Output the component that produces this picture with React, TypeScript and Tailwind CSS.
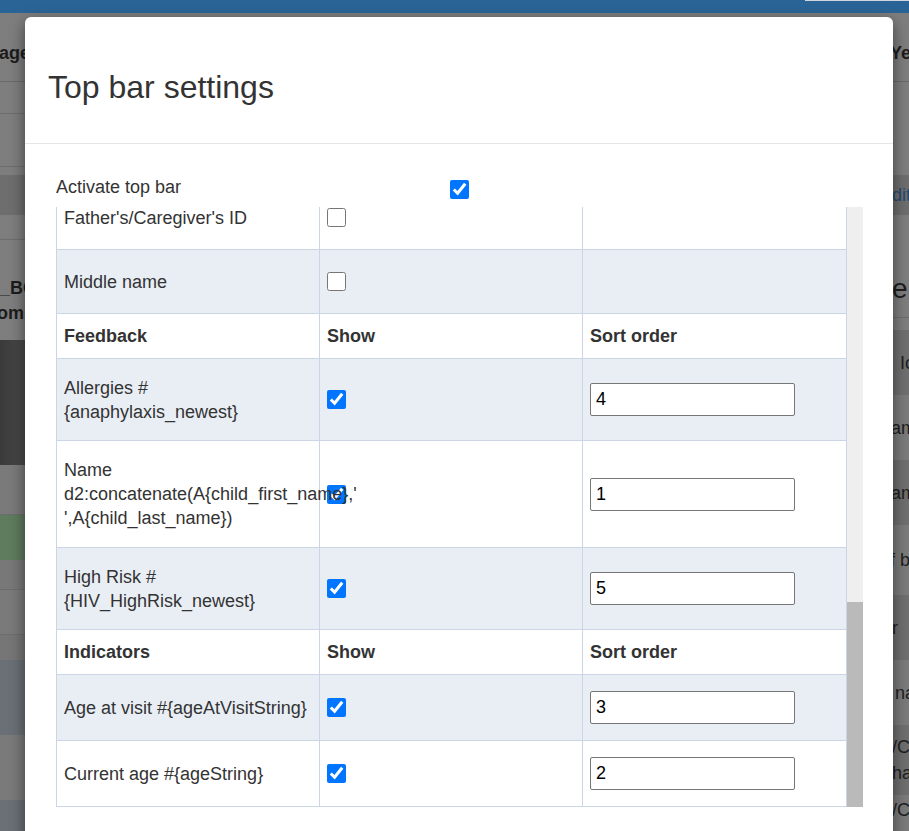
import { useLayoutEffect, useRef, useState } from 'react';
import type { ReactNode } from 'react';

type Item = { label: ReactNode; show: boolean; order?: string; height: string };
type Group = { title: string; items: Item[] };

const plain = (label: string): Item => ({ label, show: false, height: 'h-[64px]' });

const groups: Group[] = [
  {
    title: 'Attributes',
    items: [
      'Unique ID',
      'First name',
      'Last name',
      'Sex',
      'Date of birth',
      'Place of birth',
      "Mother's name",
      "Mother's ID",
      "Mother's phone number",
      "Father's/Caregiver's name",
      "Father's/Caregiver's phone",
      'Address',
      'Village',
      'District',
      'Region',
      'National ID',
      'Nationality',
      "Father's/Caregiver's ID",
      'Middle name',
    ].map(plain),
  },
  {
    title: 'Feedback',
    items: [
      {
        label: (
          <>
            Allergies #<wbr />
            {'{anaphylaxis_newest}'}
          </>
        ),
        show: true,
        order: '4',
        height: 'h-[82px]',
      },
      {
        label: "Name d2:concatenate(A{child_first_name},' ',A{child_last_name})",
        show: true,
        order: '1',
        height: 'h-[107px]',
      },
      {
        label: (
          <>
            High Risk #<wbr />
            {'{HIV_HighRisk_newest}'}
          </>
        ),
        show: true,
        order: '5',
        height: 'h-[82px]',
      },
    ],
  },
  {
    title: 'Indicators',
    items: [
      { label: 'Age at visit #{ageAtVisitString}', show: true, order: '3', height: 'h-[66px]' },
      { label: 'Current age #{ageString}', show: true, order: '2', height: 'h-[66px]' },
    ],
  },
];

const cell = 'border border-[#cad5e5] pl-[7px] pr-2 py-0 align-middle';

type FlatRow = { head: true; title: string } | { head: false; item: Item };

const rows: FlatRow[] = groups.flatMap((g) => [
  { head: true as const, title: g.title },
  ...g.items.map((item) => ({ head: false as const, item })),
]);

const LeftStrip = () => (
  <div className="flex w-[25px] flex-col overflow-hidden whitespace-nowrap text-[18px] leading-6 font-bold text-[#1c1c1c]">
    <div className="flex h-[69px] items-end border-b border-[#6a6a6a] bg-[#7e7e7e] pb-[16px]">
      <span className="-ml-[1px]">age</span>
    </div>
    <div className="h-[32px] border-b border-[#6d6d6d] bg-[#7e7e7e]" />
    <div className="h-[53px] border-b border-[#6d6d6d] bg-[#7e7e7e]" />
    <div className="h-[8px] bg-[#7e7e7e]" />
    <div className="h-[40px] bg-[#6e6e6e]" />
    <div className="h-[25px] border-b border-[#6d6d6d] bg-[#7e7e7e]" />
    <div className="flex h-[100px] flex-col bg-[#7e7e7e] pt-[36px] leading-[25px]">
      <span>_BC</span>
      <span className="-ml-[3px]">omL</span>
    </div>
    <div className="h-[125px] bg-gradient-to-r from-[#3a3a3a] to-[#4a4a4a]" />
    <div className="h-[50px] border-b border-[#6d6d6d] bg-[#7a7a7a]" />
    <div className="h-[45px] bg-[#5f7c5e]" />
    <div className="h-[30px] border-b border-[#6d6d6d] bg-[#787878]" />
    <div className="h-[45px] border-b border-[#6d6d6d] bg-[#7a7a7a]" />
    <div className="h-[25px] bg-[#767676]" />
    <div className="h-[75px] bg-[#6b7076]" />
    <div className="h-[65px] bg-[#7a7a7a]" />
    <div className="flex-1 bg-[#6b7076]" />
  </div>
);

const RightStrip = () => (
  <div className="flex w-[16px] flex-col overflow-hidden whitespace-nowrap text-[18px] leading-6 text-[#1e1e1e]">
    <div className="flex h-[69px] items-end border-b border-[#6a6a6a] bg-[#7e7e7e] pb-[16px] font-bold">
      <span className="-ml-[3px]">Ye</span>
    </div>
    <div className="h-[93px] bg-[#7e7e7e]" />
    <div className="flex h-[40px] items-center bg-[#6e6e6e] text-[#234a72]">
      <span className="-ml-[1px]">dit</span>
    </div>
    <div className="flex h-[103px] items-end border-b border-[#6d6d6d] bg-[#7e7e7e] pb-[12px] text-[28px] leading-[32px]">
      <span className="-ml-[1px]">e</span>
    </div>
    <div className="h-[12px] bg-[#7e7e7e]" />
    <div className="flex h-[65px] items-center bg-[#6f6f6f] pl-[7px]">Ic</div>
    <div className="flex h-[65px] items-center bg-[#7b7b7b]">
      <span className="-ml-[2px]">am</span>
    </div>
    <div className="flex h-[65px] items-center bg-[#6f6f6f]">
      <span className="-ml-[2px]">am</span>
    </div>
    <div className="flex h-[70px] items-center bg-[#7b7b7b]">
      <span className="-ml-[3px]">f b</span>
    </div>
    <div className="flex h-[65px] items-center bg-[#6f6f6f]">
      <span className="-ml-[1px]">r</span>
    </div>
    <div className="flex h-[65px] items-center bg-[#7b7b7b] pl-[2px]">na</div>
    <div className="flex h-[70px] flex-col justify-center bg-[#6f6f6f] leading-[26px]">
      <span className="-ml-[1px]">/C</span>
      <span className="-ml-[1px]">har</span>
    </div>
    <div className="flex flex-1 items-start bg-[#7b7b7b] pt-[3px]">
      <span className="-ml-[1px]">/C</span>
    </div>
  </div>
);

const SettingsTable = () => (
  <table className="w-[791px] table-fixed border-collapse text-[18px] leading-6 text-[#333]">
    <colgroup>
      <col className="w-[263px]" />
      <col className="w-[263px]" />
      <col />
    </colgroup>
    <tbody>
      {rows.map((row, i) => {
        const striped = (rows.length - 1 - i) % 2 === 1;
        const bg = striped ? 'bg-[#e9eef5]' : 'bg-white';
        if (row.head) {
          return (
            <tr key={`h-${row.title}`} className={`h-[45px] font-bold ${bg}`}>
              <td className={cell}>{row.title}</td>
              <td className={cell}>Show</td>
              <td className={cell}>Sort order</td>
            </tr>
          );
        }
        const { item } = row;
        return (
          <tr key={i} className={`${item.height} ${bg}`}>
            <td className={cell}>{item.label}</td>
            <td className={cell}>
              <input type="checkbox" defaultChecked={item.show} className="block h-[19px] w-[19px]" />
            </td>
            <td className={cell}>
              {item.order !== undefined && (
                <input
                  type="text"
                  readOnly
                  defaultValue={item.order}
                  className="block h-[33px] w-[205px] rounded-[2px] border border-[#767676] bg-white px-[5px] text-[18px] text-black"
                />
              )}
            </td>
          </tr>
        );
      })}
    </tbody>
  </table>
);

export default function App() {
  const scrollRef = useRef<HTMLDivElement>(null);
  const [thumb, setThumb] = useState({ top: 0, height: 0 });

  // the list is shown scrolled to its end
  useLayoutEffect(() => {
    const el = scrollRef.current;
    if (!el) return;
    el.scrollTop = el.scrollHeight;
    const ratio = el.clientHeight / el.scrollHeight;
    setThumb({ top: el.scrollTop * ratio, height: el.clientHeight * ratio });
  }, []);

  return (
    <div className="relative h-[831px] w-[909px] overflow-hidden bg-[#7e7e7e] font-['Liberation_Sans',Arial,sans-serif]">
      {/* page behind the backdrop */}
      <div className="flex h-[13px] justify-end bg-[#2a6496]">
        <div className="h-px w-[104px] bg-[#cfd6de]" />
      </div>
      <div className="flex h-[818px]">
        <LeftStrip />
        <div className="flex-1 bg-[#7e7e7e]" />
        <RightStrip />
      </div>

      {/* modal */}
      <div className="absolute left-[25px] top-[17px] h-[840px] w-[868px] rounded-[6px] bg-white shadow-[0_5px_15px_rgba(0,0,0,0.5)]">
        <div className="h-[127px] border-b border-[#e5e5e5] px-[23px] pt-[52px]">
          <h4 className="text-[32px] leading-[37px] font-normal text-[#333]">Top bar settings</h4>
        </div>
        <div className="pl-[31px] pt-[31px]">
          <div className="flex h-[24px] items-start">
            <label className="w-[394px] text-[18px] leading-6 text-[#333]">Activate top bar</label>
            <input type="checkbox" defaultChecked className="mt-[5px] block h-[19px] w-[19px]" />
          </div>
          <div className="mt-[8px] flex h-[600px] w-[807px]">
            <div ref={scrollRef} className="h-full w-[791px] overflow-hidden">
              <SettingsTable />
            </div>
            <div className="h-full w-[16px] bg-[#efefef]">
              <div className="bg-[#bababa]" style={{ marginTop: thumb.top, height: thumb.height }} />
            </div>
          </div>
        </div>
      </div>
    </div>
  );
}
